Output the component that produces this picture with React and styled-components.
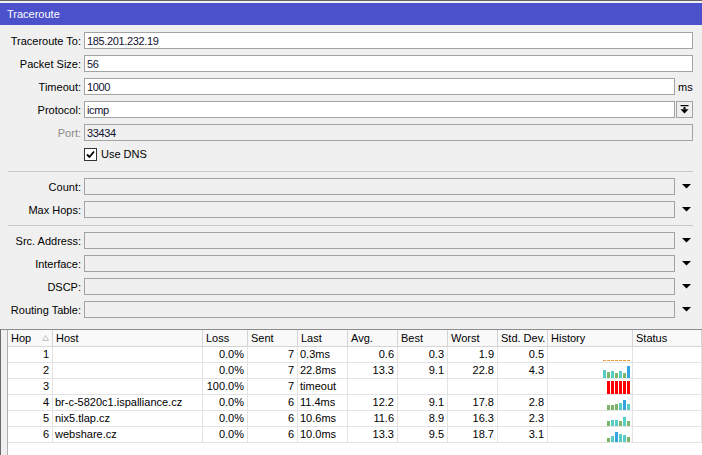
import React from 'react';
import styled, { createGlobalStyle } from 'styled-components';

const GlobalStyle = createGlobalStyle`
  html, body {
    margin: 0;
    padding: 0;
    background: #f0f0f0;
  }
  body {
    font-family: "Liberation Sans", Arial, sans-serif;
    font-size: 11px;
    color: #000;
  }
`;

const Window = styled.div`
  width: 702px;
  height: 455px;
  box-sizing: border-box;
  border-top: 1px solid #646464;
  background: #f0f0f0;
  display: flex;
  flex-direction: column;
  overflow: hidden;
`;

const TitleBar = styled.div`
  margin-top: 2px;
  height: 22px;
  background: #4b50cb;
  color: #fff;
  display: flex;
  align-items: center;
  padding-left: 7px;
  font-size: 11px;
`;

const Form = styled.div`
  display: flex;
  flex-direction: column;
  padding: 7px 9px 11px 0;
`;

const Section = styled.div`
  display: flex;
  flex-direction: column;
  gap: 6px;
`;

const Separator = styled.div`
  height: 1px;
  background: #c6c6c6;
  margin: 7px 0 6px 8px;
`;

const Row = styled.div`
  display: flex;
  align-items: center;
  height: 17px;
`;

const Label = styled.div`
  width: 81px;
  margin-right: 3px;
  text-align: right;
  white-space: nowrap;
  color: ${(p) => (p.$muted ? '#8a8a8a' : '#000')};
`;

const Field = styled.div`
  flex: 1;
  height: 17px;
  box-sizing: border-box;
  border: 1px solid #a3a3a3;
  background: ${(p) => (p.$disabled ? '#f0f0f0' : '#fff')};
  padding: 0 2px;
  display: flex;
  align-items: center;
  letter-spacing: -0.35px;
  color: #101030;
`;

const Suffix = styled.div`
  width: 17px;
  height: 17px;
  margin-left: 1px;
  box-sizing: border-box;
  display: flex;
  align-items: center;
  justify-content: ${(p) => (p.$end ? 'flex-end' : 'flex-start')};
  padding: 0 ${(p) => (p.$end ? '2px' : '0')} 0 ${(p) => (p.$end ? '0' : '2px')};
`;

const DropButton = styled.div`
  width: 17px;
  height: 17px;
  margin-left: 1px;
  box-sizing: border-box;
  border: 1px solid #a3a3a3;
  background: #f0f0f0;
  display: flex;
  align-items: center;
  justify-content: center;
`;

const CheckRow = styled.div`
  height: 17px;
  box-sizing: border-box;
  padding: 1px 0 0 84px;
  display: flex;
  align-items: flex-start;
`;

const Box = styled.div`
  width: 13px;
  height: 13px;
  box-sizing: border-box;
  border: 1px solid #333;
  background: #fff;
  display: flex;
  align-items: center;
  justify-content: center;
`;

const CheckText = styled.span`
  margin-left: 4px;
  line-height: 13px;
`;

const TablePane = styled.div`
  flex: 1;
  display: flex;
  border-top: 1px solid #8c8c8c;
  border-left: 1px solid #6a6a6a;
  padding-left: 6px;
`;

const Grid = styled.div`
  flex: 1;
  background: #fff;
  border-left: 1px solid #b0b0b0;
`;

const COLUMNS = '45px 150px 45px 50px 50px 50px 50px 50px 50px 85px 1fr';

const HeadRow = styled.div`
  display: grid;
  grid-template-columns: ${COLUMNS};
  height: 17px;
  box-sizing: border-box;
  border-bottom: 1px solid #d5d5d5;
  background: #f9f9f9;
`;

const HeadCell = styled.div`
  box-sizing: border-box;
  border-right: 1px solid #d5d5d5;
  padding-left: 3px;
  line-height: 16px;
  white-space: nowrap;
  overflow: hidden;
  display: flex;
  align-items: center;
`;

const SortMark = styled.svg`
  margin-left: auto;
  margin-right: 3px;
`;

const BodyRow = styled.div`
  display: grid;
  grid-template-columns: ${COLUMNS};
  height: 16px;
  box-sizing: border-box;
  border-bottom: 1px solid #e3e3e3;
`;

const Cell = styled.div`
  box-sizing: border-box;
  border-right: 1px solid #e3e3e3;
  line-height: 15px;
  white-space: nowrap;
  overflow: hidden;
  text-align: ${(p) => (p.$right ? 'right' : 'left')};
  padding: ${(p) => (p.$right ? '0 3px 0 0' : '0 0 0 2px')};
`;

const HistoryCell = styled.div`
  box-sizing: border-box;
  border-right: 1px solid #e3e3e3;
  display: flex;
  justify-content: flex-end;
  align-items: flex-end;
  padding-right: 2px;
`;

const COLORS = { t: '#58cdc6', g: '#7db56a', b: '#34a5de', r: '#ff0000' };

function DownArrow() {
  return (
    <svg width="9" height="5" viewBox="0 0 9 5">
      <polygon points="0,0 9,0 4.5,4.5" fill="#000" />
    </svg>
  );
}

function History({ bars, dash }) {
  if (dash) {
    const w = dash * 4 - 1;
    return (
      <svg width={w} height="15">
        {Array.from({ length: dash }).map((_, i) => (
          <rect key={i} x={i * 4} y="13" width="3" height="1" fill="#eb9a36" />
        ))}
      </svg>
    );
  }
  const w = bars.length * 4 - 1;
  return (
    <svg width={w} height="15">
      {bars.map(([c, h], i) => (
        <rect key={i} x={i * 4} y={15 - h} width="3" height={h} fill={COLORS[c]} />
      ))}
    </svg>
  );
}

const hops = [
  { hop: 1, host: '', loss: '0.0%', sent: 7, last: '0.3ms', avg: '0.6', best: '0.3', worst: '1.9', std: '0.5', dash: 7 },
  { hop: 2, host: '', loss: '0.0%', sent: 7, last: '22.8ms', avg: '13.3', best: '9.1', worst: '22.8', std: '4.3',
    bars: [['t', 8], ['g', 6], ['t', 7], ['g', 5], ['t', 7], ['g', 5], ['b', 12]] },
  { hop: 3, host: '', loss: '100.0%', sent: 7, last: 'timeout', avg: '', best: '', worst: '', std: '',
    bars: [['r', 13], ['r', 13], ['r', 13], ['r', 13], ['r', 13], ['r', 13]] },
  { hop: 4, host: 'br-c-5820c1.ispalliance.cz', loss: '0.0%', sent: 6, last: '11.4ms', avg: '12.2', best: '9.1', worst: '17.8', std: '2.8',
    bars: [['g', 5], ['g', 5], ['g', 6], ['t', 7], ['b', 10], ['t', 6]] },
  { hop: 5, host: 'nix5.tlap.cz', loss: '0.0%', sent: 6, last: '10.6ms', avg: '11.6', best: '8.9', worst: '16.3', std: '2.3',
    bars: [['g', 5], ['t', 6], ['t', 6], ['g', 5], ['t', 9], ['g', 5]] },
  { hop: 6, host: 'webshare.cz', loss: '0.0%', sent: 6, last: '10.0ms', avg: '13.3', best: '9.5', worst: '18.7', std: '3.1',
    bars: [['g', 4], ['t', 6], ['b', 10], ['t', 8], ['t', 7], ['g', 5]] },
];

const headers = ['Host', 'Loss', 'Sent', 'Last', 'Avg.', 'Best', 'Worst', 'Std. Dev.', 'History', 'Status'];

function ComboRow({ label }) {
  return (
    <Row>
      <Label>{label}:</Label>
      <Field $disabled />
      <Suffix $end>
        <DownArrow />
      </Suffix>
    </Row>
  );
}

export default function App() {
  return (
    <>
      <GlobalStyle />
      <Window>
        <TitleBar>Traceroute</TitleBar>
        <Form>
          <Section>
            <Row>
              <Label>Traceroute To:</Label>
              <Field>185.201.232.19</Field>
            </Row>
            <Row>
              <Label>Packet Size:</Label>
              <Field>56</Field>
            </Row>
            <Row>
              <Label>Timeout:</Label>
              <Field>1000</Field>
              <Suffix>ms</Suffix>
            </Row>
            <Row>
              <Label>Protocol:</Label>
              <Field>icmp</Field>
              <DropButton>
                <svg width="9" height="9" viewBox="0 0 9 9">
                  <rect x="0.5" y="0" width="8" height="1.2" fill="#000" />
                  <rect x="3.5" y="2" width="2" height="2.5" fill="#000" />
                  <polygon points="0.5,4.3 8.5,4.3 4.5,8.5" fill="#000" />
                </svg>
              </DropButton>
            </Row>
            <Row>
              <Label $muted>Port:</Label>
              <Field $disabled>33434</Field>
            </Row>
            <CheckRow>
              <Box>
                <svg width="9" height="9" viewBox="0 0 9 9">
                  <path d="M1 4.5 L3.5 7 L8 1.5" fill="none" stroke="#000" strokeWidth="1.8" />
                </svg>
              </Box>
              <CheckText>Use DNS</CheckText>
            </CheckRow>
          </Section>
          <Separator />
          <Section>
            <ComboRow label="Count" />
            <ComboRow label="Max Hops" />
          </Section>
          <Separator />
          <Section>
            <ComboRow label="Src. Address" />
            <ComboRow label="Interface" />
            <ComboRow label="DSCP" />
            <ComboRow label="Routing Table" />
          </Section>
        </Form>
        <TablePane>
          <Grid>
            <HeadRow>
              <HeadCell>
                Hop
                <SortMark width="7" height="6" viewBox="0 0 7 6">
                  <polygon points="3.5,0.5 6.5,5.5 0.5,5.5" fill="none" stroke="#c4c4c4" strokeWidth="1" />
                </SortMark>
              </HeadCell>
              {headers.map((h) => (
                <HeadCell key={h}>{h}</HeadCell>
              ))}
            </HeadRow>
            {hops.map((r) => (
              <BodyRow key={r.hop}>
                <Cell $right>{r.hop}</Cell>
                <Cell>{r.host}</Cell>
                <Cell $right>{r.loss}</Cell>
                <Cell $right>{r.sent}</Cell>
                <Cell>{r.last}</Cell>
                <Cell $right>{r.avg}</Cell>
                <Cell $right>{r.best}</Cell>
                <Cell $right>{r.worst}</Cell>
                <Cell $right>{r.std}</Cell>
                <HistoryCell>
                  <History bars={r.bars} dash={r.dash} />
                </HistoryCell>
                <Cell />
              </BodyRow>
            ))}
          </Grid>
        </TablePane>
      </Window>
    </>
  );
}
